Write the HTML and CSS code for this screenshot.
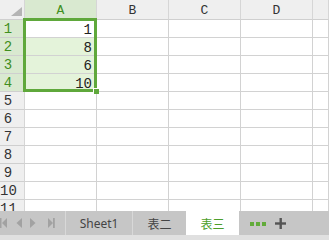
FILE: index.html
```html
<!DOCTYPE html>
<html lang="zh">
<head>
  <meta charset="UTF-8">
  <title>表三</title>
  <link rel="stylesheet" href="styles.css">
</head>
<body>
  <div class="sheet">
    <div class="grid">
      <div class="corner">
        <svg width="11" height="9" viewBox="0 0 11 9"><polygon points="11,0 11,9 0,9" fill="#b4b4b4"/></svg>
      </div>
      <div class="colhead active">A</div>
      <div class="colhead">B</div>
      <div class="colhead">C</div>
      <div class="colhead">D</div>
      <div class="colhead"></div>

      <div class="rowhead active">1</div>
      <div class="cell num current">1</div>
      <div class="cell"></div><div class="cell"></div><div class="cell"></div><div class="cell"></div>

      <div class="rowhead active">2</div>
      <div class="cell num picked">8</div>
      <div class="cell"></div><div class="cell"></div><div class="cell"></div><div class="cell"></div>

      <div class="rowhead active">3</div>
      <div class="cell num picked">6</div>
      <div class="cell"></div><div class="cell"></div><div class="cell"></div><div class="cell"></div>

      <div class="rowhead active">4</div>
      <div class="cell num picked">10</div>
      <div class="cell"></div><div class="cell"></div><div class="cell"></div><div class="cell"></div>

      <div class="rowhead">5</div>
      <div class="cell"></div><div class="cell"></div><div class="cell"></div><div class="cell"></div><div class="cell"></div>
      <div class="rowhead">6</div>
      <div class="cell"></div><div class="cell"></div><div class="cell"></div><div class="cell"></div><div class="cell"></div>
      <div class="rowhead">7</div>
      <div class="cell"></div><div class="cell"></div><div class="cell"></div><div class="cell"></div><div class="cell"></div>
      <div class="rowhead">8</div>
      <div class="cell"></div><div class="cell"></div><div class="cell"></div><div class="cell"></div><div class="cell"></div>
      <div class="rowhead">9</div>
      <div class="cell"></div><div class="cell"></div><div class="cell"></div><div class="cell"></div><div class="cell"></div>
      <div class="rowhead">10</div>
      <div class="cell"></div><div class="cell"></div><div class="cell"></div><div class="cell"></div><div class="cell"></div>
      <div class="rowhead">11</div>
      <div class="cell"></div><div class="cell"></div><div class="cell"></div><div class="cell"></div><div class="cell"></div>

      <!-- selection box over A1:A4 -->
      <div class="selection"><span class="handle"></span></div>
    </div>

    <div class="tabs">
      <div class="nav">
        <svg width="65" height="24" viewBox="0 0 65 24">
          <g fill="#a2a2a2">
            <rect x="0" y="7" width="1.5" height="10"/>
            <polygon points="7,7 2,12 7,17"/>
            <polygon points="22,7 16.5,12 22,17"/>
            <polygon points="30,7 35.5,12 30,17"/>
            <polygon points="48,7 53,12 48,17"/>
            <rect x="53" y="7" width="1.8" height="10"/>
          </g>
        </svg>
      </div>
      <div class="tab sep">Sheet1</div>
      <div class="tab">表二</div>
      <div class="tab active">表三</div>
      <div class="more">
        <svg width="16" height="4" viewBox="0 0 16 4">
          <g fill="#62ab3a">
            <rect x="0" y="0" width="4" height="4"/>
            <rect x="6" y="0" width="4" height="4"/>
            <rect x="12" y="0" width="4" height="4"/>
          </g>
        </svg>
        <svg class="plus" width="11" height="11" viewBox="0 0 11 11">
          <g fill="#555">
            <rect x="4.5" y="0" width="2.4" height="11"/>
            <rect x="0" y="4.3" width="11" height="2.4"/>
          </g>
        </svg>
      </div>
    </div>
    <div class="strip"></div>
  </div>
</body>
</html>
```

FILE: styles.css
```css
* {
  margin: 0;
  padding: 0;
  box-sizing: border-box;
}

body {
  background: #ffffff;
  overflow: hidden;
}

.sheet {
  width: 329px;
  height: 240px;
  display: flex;
  flex-direction: column;
}

/* Grid */
.grid {
  position: relative;
  height: 211px;
  overflow: hidden;
  display: grid;
  grid-template-columns: 25px 72px 72px 72px 72px 16px;
  grid-template-rows: 20px repeat(11, 18px);
  font-family: "Liberation Mono", monospace;
  font-size: 13px;
  color: #333;
}

.corner,
.colhead,
.rowhead {
  background: #efefef;
  border-right: 1px solid #d6d6d6;
  border-bottom: 1px solid #cfcfcf;
}

.corner {
  display: flex;
  justify-content: flex-end;
  align-items: flex-end;
  padding: 0 2px 3px 0;
}

.colhead {
  text-align: center;
  line-height: 21px;
}

.rowhead {
  text-align: center;
  padding-right: 8px;
  line-height: 19px;
  font-size: 14px;
}

.colhead.active,
.rowhead.active {
  background: #d9e9d0;
  color: #3f8e20;
}

.cell {
  border-right: 1px solid #d2d2d2;
  border-bottom: 1px solid #d2d2d2;
}

.cell.num {
  text-align: right;
  padding-right: 4px;
  line-height: 20px;
  font-size: 14px;
  color: #222;
}

.cell.picked {
  background: #e4f3da;
}

/* Selection */
.selection {
  position: absolute;
  left: 23px;
  top: 18px;
  width: 74px;
  height: 74px;
  border: 3px solid #5fa83b;
}

.handle {
  position: absolute;
  left: 68px;
  top: 68px;
  width: 5px;
  height: 5px;
  background: #5fa83b;
  box-shadow: -1px -1px 0 #ffffff;
}

/* Sheet tabs */
.tabs {
  height: 24px;
  background: #c6c6c6;
  display: flex;
  align-items: stretch;
  font-family: "Noto Sans", "Noto Sans CJK SC", sans-serif;
  font-size: 12px;
  color: #444;
}

.nav {
  width: 66px;
  border-right: 1px solid #d8d8d8;
}

.nav svg {
  display: block;
}

.tab {
  width: 53px;
  display: flex;
  justify-content: center;
  align-items: center;
  padding-top: 1px;
}

.tab.sep {
  width: 67px;
  border-right: 1px solid #d8d8d8;
}

.tab.active {
  background: #ffffff;
  color: #4c9e2a;
}

.more {
  display: flex;
  align-items: center;
  padding-left: 11px;
  padding-top: 1px;
}

.more .plus {
  margin-left: 9px;
}

.strip {
  height: 5px;
  background: #e0e0e0;
}
```
